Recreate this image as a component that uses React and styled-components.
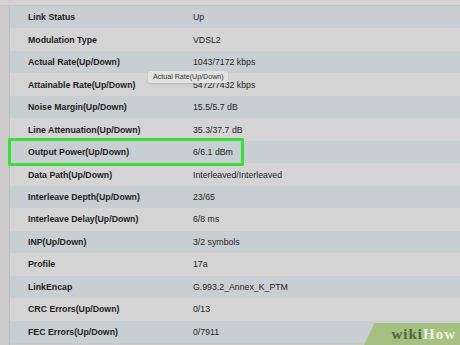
import React from 'react';
import styled, { createGlobalStyle } from 'styled-components';

const GlobalStyle = createGlobalStyle`
  html, body {
    margin: 0;
    padding: 0;
    width: 460px;
    height: 345px;
    overflow: hidden;
    background: #cbcbcb;
    font-family: 'Liberation Sans', Arial, sans-serif;
  }
`;

const Page = styled.div`
  position: relative;
  width: 460px;
  height: 345px;
  overflow: hidden;
  background: #c9c9c9;
  display: flex;
  flex-direction: column;
`;

const TopStrip = styled.div`
  height: 5px;
  flex-shrink: 0;
  background: #d6d1d5;
  border-bottom: 1px solid #c2c4c6;
`;

const Body = styled.div`
  display: flex;
  flex: 1;
`;

const Gutter = styled.div`
  width: 9px;
  flex-shrink: 0;
  background: #cacaca;
  border-right: 1px solid #bdbdbd;
`;

const Table = styled.div`
  flex: 1;
  display: flex;
  flex-direction: column;
`;

const Row = styled.div`
  height: 22.47px;
  display: grid;
  grid-template-columns: 183px 1fr;
  align-items: center;
  background: ${(p) => (p.$odd ? '#c8cfd3' : '#d4d4d4')};
  font-size: 8.75px;
  color: #1e1e1e;
`;

const Label = styled.div`
  padding-left: 18px;
  font-weight: bold;
  white-space: nowrap;
`;

const Value = styled.div`
  white-space: nowrap;
`;

const Highlight = styled.div`
  position: absolute;
  left: 8px;
  top: 138px;
  width: 230px;
  height: 22px;
  border: 3px solid #3cdc3c;
  border-radius: 1px;
  pointer-events: none;
`;

const Tooltip = styled.div`
  position: absolute;
  left: 148px;
  top: 71px;
  padding: 2px 4px 2px 5px;
  background: #e2e2e2;
  border-radius: 2px;
  box-shadow: 0 1px 2px rgba(0, 0, 0, 0.15);
  font-size: 7.1px;
  color: #333;
  white-space: nowrap;
`;

const Badge = styled.div`
  position: absolute;
  right: 0;
  bottom: 0;
  width: 96px;
  height: 22px;
  background: #a5c080;
  clip-path: polygon(11% 0, 100% 0, 100% 100%, 0 100%);
  display: flex;
  align-items: center;
  justify-content: flex-end;
  padding-right: 4px;
  box-sizing: border-box;
`;

const Logo = styled.span`
  font-family: 'Liberation Serif', 'Times New Roman', serif;
  font-weight: bold;
  font-size: 15px;
  letter-spacing: 1px;
  line-height: 1;
  color: ${(p) => p.$color};
`;

const rows = [
  ['Link Status', 'Up'],
  ['Modulation Type', 'VDSL2'],
  ['Actual Rate(Up/Down)', '1043/7172 kbps'],
  ['Attainable Rate(Up/Down)', '5472/7432 kbps'],
  ['Noise Margin(Up/Down)', '15.5/5.7 dB'],
  ['Line Attenuation(Up/Down)', '35.3/37.7 dB'],
  ['Output Power(Up/Down)', '6/6.1 dBm'],
  ['Data Path(Up/Down)', 'Interleaved/Interleaved'],
  ['Interleave Depth(Up/Down)', '23/65'],
  ['Interleave Delay(Up/Down)', '6/8 ms'],
  ['INP(Up/Down)', '3/2 symbols'],
  ['Profile', '17a'],
  ['LinkEncap', 'G.993.2_Annex_K_PTM'],
  ['CRC Errors(Up/Down)', '0/13'],
  ['FEC Errors(Up/Down)', '0/7911'],
];

export default function App() {
  return (
    <Page>
      <GlobalStyle />
      <TopStrip />
      <Body>
        <Gutter />
        <Table>
          {rows.map(([label, value], i) => (
            <Row key={label} $odd={i % 2 === 0}>
              <Label>{label}</Label>
              <Value>{value}</Value>
            </Row>
          ))}
        </Table>
      </Body>

      {/* hover tooltip over the rate row */}
      <Tooltip>Actual Rate(Up/Down)</Tooltip>

      {/* green box round Output Power */}
      <Highlight />

      <Badge>
        <Logo $color="#476a3c">wiki</Logo>
        <Logo $color="#eef4e6">How</Logo>
      </Badge>
    </Page>
  );
}
